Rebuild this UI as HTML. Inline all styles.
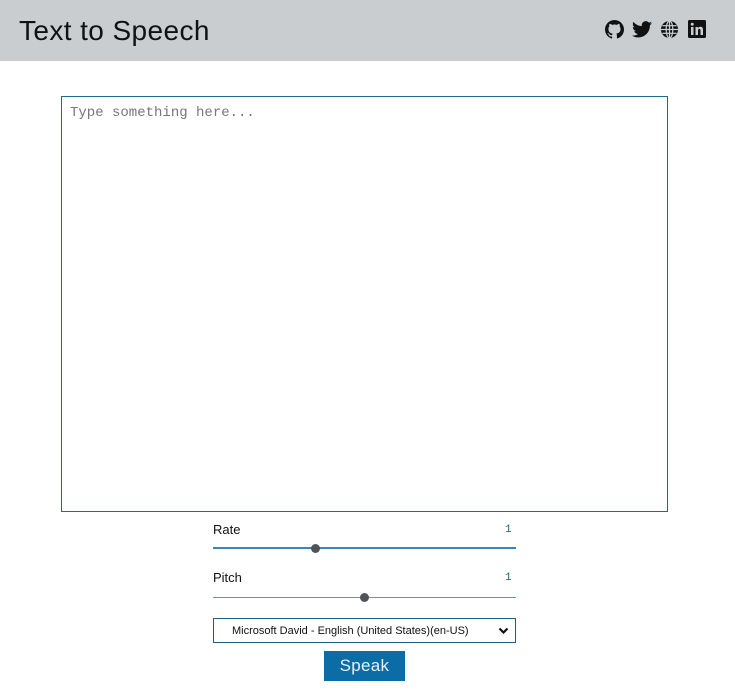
<!DOCTYPE html>
<html><head><style>
body{margin:0;width:735px;height:692px;background:#fff;font-family:"Liberation Sans",sans-serif;position:relative;overflow:hidden}
.hdr{position:absolute;left:0;top:0;width:735px;height:61px;background:#cacdd0}
.hdr h1{position:absolute;left:19px;top:15px;margin:0;font-weight:normal;font-size:28px;color:#111;letter-spacing:0.4px}
.ic{position:absolute;top:20px}
.ta{position:absolute;left:61px;top:96px;width:605px;height:414px;border:1px solid #1d6d86}
.ta span{position:absolute;left:8px;top:8px;font-family:"Liberation Mono",monospace;font-size:14px;color:#777}
.lbl{position:absolute;left:213px;font-size:13px;color:#111}
.val{position:absolute;left:505px;font-family:"Liberation Mono",monospace;font-size:11px;color:#1a5d8a}
.trk{position:absolute;left:213px;width:303px}
.th{position:absolute;width:9px;height:9px;border-radius:50%;background:#505358}
.sel{position:absolute;left:213px;top:618px;width:301px;height:23px;border:1px solid #1d5f7a;font-size:11px;color:#111}
.btn{position:absolute;left:324px;top:651px;width:81px;height:30px;background:#0c6ca6;color:#e6f1f8;font-size:17px;text-align:center;line-height:30px;letter-spacing:0.3px}
</style></head><body>
<div class="hdr"><h1>Text to Speech</h1>
<svg class="ic" style="left:605px" width="19" height="19" viewBox="0 0 16 16"><path fill="#111" d="M8 0C3.6 0 0 3.6 0 8c0 3.5 2.3 6.5 5.5 7.6.4.1.5-.2.5-.4v-1.4c-2.2.5-2.7-1-2.7-1-.4-.9-.9-1.2-.9-1.2-.7-.5.1-.5.1-.5.8.1 1.2.8 1.2.8.7 1.2 1.9.9 2.300.7.1-.5.3-.9.5-1.1-1.8-.2-3.6-.9-3.6-4 0-.9.3-1.600.8-2.1-.1-.2-.4-1 .1-2.1 0 0 .7-.2 2.2.8.6-.2 1.3-.3 2-.3s1.4.1 2 .3c1.5-1 2.2-.8 2.2-.8.4 1.1.2 1.9.1 2.1.5.6.8 1.3.8 2.1 0 3.1-1.9 3.7-3.6 3.9.3.3.5.8.5 1.5v2.2c0 .2.1.5.6.4C13.7 14.5 16 11.5 16 8c0-4.4-3.6-8-8-8z"/></svg>
<svg class="ic" style="left:632px" width="20" height="19" viewBox="0 0 24 20"><path fill="#111" d="M24 2.4c-.9.4-1.8.7-2.8.8 1-.6 1.8-1.6 2.2-2.7-1 .6-2 1-3.1 1.2C19.4.7 18.1 0 16.6 0c-2.7 0-4.9 2.2-4.9 4.900 0 .4 0 .8.1 1.1C7.7 5.8 4.1 3.9 1.7.9c-.4.7-.7 1.6-.7 2.5 0 1.7.9 3.2 2.2 4.1-.8 0-1.6-.2-2.2-.6v.1c0 2.4 1.7 4.4 3.9 4.8-.4.1-.8.2-1.3.2-.3 0-.6 0-.9-.1.6 2 2.4 3.4 4.6 3.4-1.7 1.3-3.8 2.1-6.1 2.1-.4 0-.8 0-1.2-.1 2.2 1.4 4.8 2.2 7.5 2.2 9.1 0 14-7.5 14-14v-.6c1-.7 1.8-1.6 2.5-2.5z"/></svg>
<svg class="ic" style="left:660px" width="19" height="19" viewBox="0 0 20 20"><circle cx="10" cy="10" r="9" fill="#111"/><g stroke="#cacdd0" stroke-width="1.3" fill="none"><ellipse cx="10" cy="10" rx="3.5" ry="9"/><line x1="10" y1="1" x2="10" y2="19"/><line x1="1" y1="10" x2="19" y2="10"/><line x1="2.5" y1="6" x2="17.5" y2="6"/><line x1="2.5" y1="14" x2="17.5" y2="14"/></g></svg>
<svg class="ic" style="left:688px" width="18" height="18" viewBox="0 0 18 18"><rect width="18" height="18" rx="1.5" fill="#111"/><rect x="3" y="7" width="2.5" height="8" fill="#cacdd0"/><circle cx="4.25" cy="4.3" r="1.5" fill="#cacdd0"/><path fill="#cacdd0" d="M7.5 7h2.4v1.2c.5-.9 1.5-1.4 2.6-1.4 2 0 2.5 1.3 2.5 3.1V15h-2.5v-4.3c0-1-.2-1.8-1.2-1.8s-1.3.8-1.3 1.8V15H7.5z"/></svg>
</div>
<div class="ta"><span>Type something here...</span></div>
<div class="lbl" style="top:522px">Rate</div><div class="val" style="top:524px">1</div>
<div class="trk" style="top:547px;height:2px;background:#3a86b8"></div><div class="th" style="left:311px;top:544px"></div>
<div class="lbl" style="top:570px">Pitch</div><div class="val" style="top:572px">1</div>
<div class="trk" style="top:597px;height:1px;background:#5e9e96"></div><div class="th" style="left:360px;top:593px"></div>
<div class="sel"><span style="position:absolute;left:18px;top:6px">Microsoft David - English (United States)(en-US)</span>
<svg style="position:absolute;left:284px;top:8px" width="11" height="8" viewBox="0 0 11 8"><path d="M1.5 1.5l4 4 4-4" stroke="#111" stroke-width="2.2" fill="none"/></svg></div>
<div class="btn">Speak</div>
</body></html>
